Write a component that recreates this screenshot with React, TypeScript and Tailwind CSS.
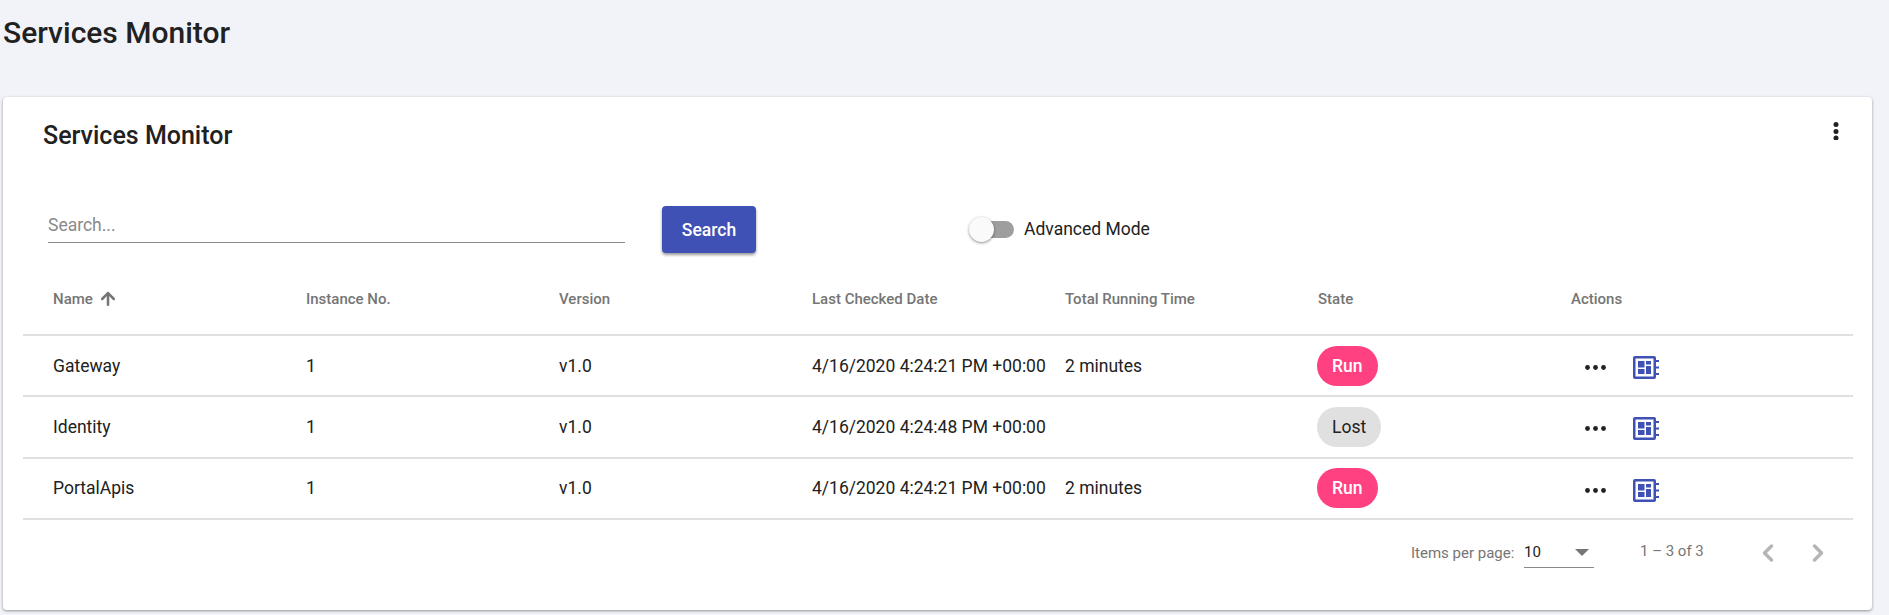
import React from "react";
import { ArrowUp, ChevronLeft, ChevronRight } from "lucide-react";

const rows = [
  { name: "Gateway", date: "4/16/2020 4:24:21 PM +00:00", time: "2 minutes", state: "Run" },
  { name: "Identity", date: "4/16/2020 4:24:48 PM +00:00", time: "", state: "Lost" },
  { name: "PortalApis", date: "4/16/2020 4:24:21 PM +00:00", time: "2 minutes", state: "Run" },
];

const gridClass = "grid grid-cols-[repeat(7,253px)] pl-[30px] items-center";

function Dots() {
  return (
    <svg width="21" height="5" viewBox="0 0 21 5" fill="#212121">
      <circle cx="2.5" cy="2.5" r="2.4" />
      <circle cx="10.5" cy="2.5" r="2.4" />
      <circle cx="18.5" cy="2.5" r="2.4" />
    </svg>
  );
}

function ReportIcon() {
  return (
    <svg width="26" height="23" viewBox="0 0 26 23" fill="#3f51b5">
      <path d="M2 0h19a2 2 0 0 1 2 2v19a2 2 0 0 1-2 2H2a2 2 0 0 1-2-2V2a2 2 0 0 1 2-2zm.5 2.5v18h18v-18z" fillRule="evenodd" />
      <rect x="5" y="5" width="6.5" height="6.5" />
      <rect x="5" y="13" width="6.5" height="5" />
      <rect x="13" y="5" width="5" height="3.5" />
      <rect x="13" y="10" width="5" height="8" />
      <rect x="23" y="4" width="3" height="2" />
      <rect x="23" y="10.5" width="3" height="2" />
      <rect x="23" y="17" width="3" height="2" />
    </svg>
  );
}

function StateChip({ state }: { state: string }) {
  const isRun = state === "Run";
  return (
    <span
      className={
        isRun
          ? "inline-flex items-center h-10 -ml-px px-[15px] rounded-[20px] bg-[#ff4081] text-white font-medium text-[17.5px]"
          : "inline-flex items-center h-10 -ml-px px-[15px] rounded-[20px] bg-[#e0e0e0] text-[#212121] text-[17.5px]"
      }
    >
      {state}
    </span>
  );
}

export default function App() {
  return (
    <div className="h-[615px] overflow-hidden bg-[#f1f3f9] font-[family-name:Roboto,sans-serif] text-[#212121]">
      <h1 className="h-[97px] pl-[3px] pt-[17px] text-[30px] leading-8 font-medium">Services Monitor</h1>

      <div className="ml-[3px] w-[1869px] h-[513px] bg-white rounded shadow-[0_1px_3px_rgba(0,0,0,0.4)]">
        <div className="flex justify-between h-[84px] pt-[23px] pl-[40px] pr-[33px]">
          <h2 className="text-[25px] leading-8 font-medium">Services Monitor</h2>
          <svg className="mt-[2px]" width="6" height="18" viewBox="0 0 6 18" fill="#212121">
            <circle cx="3" cy="2.5" r="2.5" />
            <circle cx="3" cy="9.5" r="2.5" />
            <circle cx="3" cy="16" r="2.5" />
          </svg>
        </div>

        <div className="flex items-start h-[90px] pt-[25px] pl-[45px]">
          <div className="w-[577px] h-[37px] border-b border-[#8a8a8a] text-[17.5px] leading-[38px] text-[#8a8a8a]">
            Search...
          </div>
          <button className="ml-[37px] w-[94px] h-[47px] pt-[1px] rounded bg-[#3f51b5] text-white text-[17.5px] font-medium shadow-[0_2px_3px_rgba(0,0,0,0.4)]">
            Search
          </button>
          <div className="flex items-center ml-[213px] h-[46px]">
            <div className="relative w-[34px] h-[17px] ml-[11px] rounded-full bg-[#9e9e9e]">
              <div className="absolute left-[-11px] top-[-4px] w-[25px] h-[25px] rounded-full bg-[#fafafa] shadow-[0_1px_3px_rgba(0,0,0,0.45)]" />
            </div>
            <span className="ml-[10px] text-[17.5px] text-[#212121]">Advanced Mode</span>
          </div>
        </div>

        <div className="ml-[20px] w-[1830px]">
          <div className={gridClass + " h-[65px] pb-[7px] border-b-2 border-[#e0e0e0] text-[15px] font-medium text-[#757575]"}>
            <div className="flex items-center gap-[5px]">
              Name
              <ArrowUp size={20} strokeWidth={3} />
            </div>
            <div>Instance No.</div>
            <div>Version</div>
            <div>Last Checked Date</div>
            <div>Total Running Time</div>
            <div>State</div>
            <div>Actions</div>
          </div>

          {rows.map((row) => (
            <div key={row.name} className={gridClass + " h-[61.3px] border-b-2 border-[#e0e0e0] text-[17.5px]"}>
              <div>{row.name}</div>
              <div>1</div>
              <div>v1.0</div>
              <div className="whitespace-nowrap">{row.date}</div>
              <div>{row.time}</div>
              <div>
                <StateChip state={row.state} />
              </div>
              <div className="flex items-center pt-[4px] pl-[14px] gap-[27px]">
                <Dots />
                <ReportIcon />
              </div>
            </div>
          ))}

          <div className="flex items-center h-[66px] pl-[1388px] text-[15px] text-[#757575]">
            <span className="w-[113px]">Items per page:</span>
            <div className="flex items-center justify-between w-[70px] h-[31px] pr-[5px] border-b border-[#8a8a8a] text-[15px] text-[#212121]">
              10
              <span className="w-0 h-0 border-x-[7px] border-x-transparent border-t-[7px] border-t-[#757575]" />
            </div>
            <span className="ml-[46px] pb-[4px]">1 – 3 of 3</span>
            <ChevronLeft className="ml-[50px] text-[#b5b5b5]" size={28} strokeWidth={3} />
            <ChevronRight className="ml-[22px] text-[#b5b5b5]" size={28} strokeWidth={3} />
          </div>
        </div>
      </div>
    </div>
  );
}
